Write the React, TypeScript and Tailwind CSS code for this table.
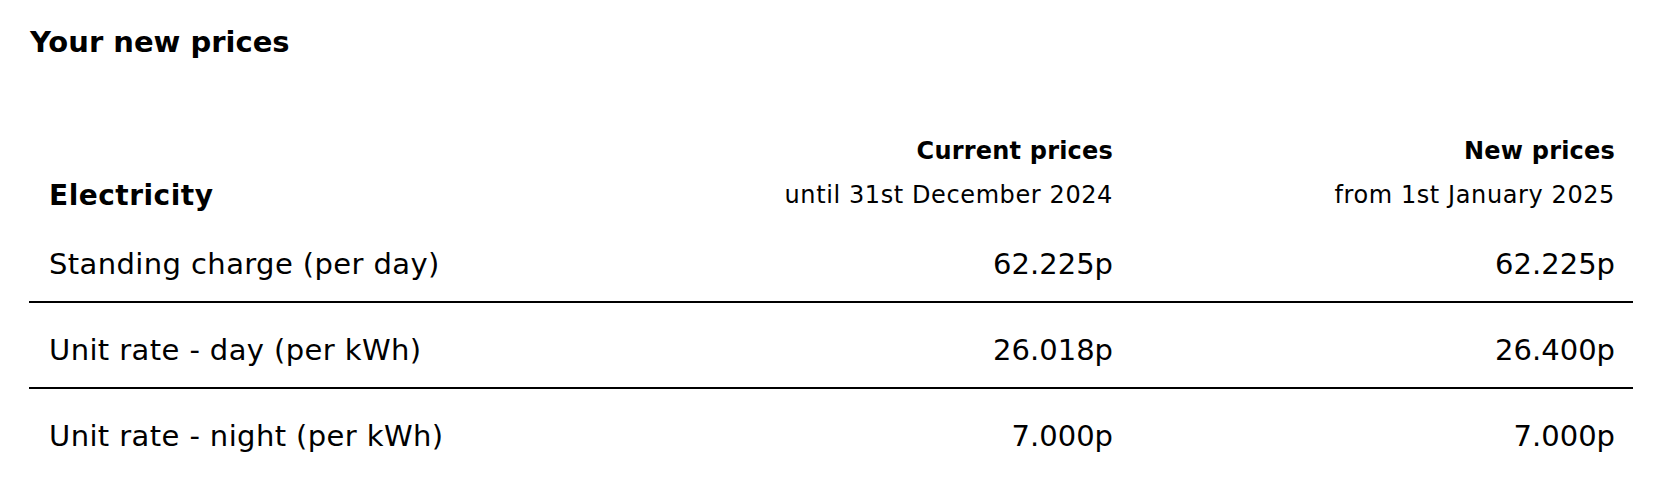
const rows = [
  { label: 'Standing charge (per day)', current: '62.225p', next: '62.225p' },
  { label: 'Unit rate - day (per kWh)', current: '26.018p', next: '26.400p' },
  { label: 'Unit rate - night (per kWh)', current: '7.000p', next: '7.000p' },
];

export default function App() {
  return (
    <div className="min-h-[484px] w-[1667px] bg-white pt-6 pl-[30px] text-black font-['DejaVu_Sans',sans-serif]">
      <h2 className="text-[29px] font-bold leading-[36px]">Your new prices</h2>

      <div className="mt-[76px] -ml-px w-[1604px]">
        <div className="grid grid-cols-[1fr_502px_502px] items-end">
          <div className="pl-5 text-[28px] font-bold leading-[28px] tracking-[0.5px]">Electricity</div>
          <PriceHead title="Current prices" note="until 31st December 2024" />
          <PriceHead title="New prices" note="from 1st January 2025" />
        </div>

        {rows.map((row, i) => (
          <div
            key={row.label}
            className={`grid grid-cols-[1fr_502px_502px] text-[29px] leading-[36px] ${
              i === 0 ? 'pt-[36px]' : 'pt-[29px]'
            } ${i < rows.length - 1 ? 'border-b-2 border-black pb-[19px]' : 'pb-[19px]'}`}
          >
            <div className="pl-5 tracking-[0.4px]">{row.label}</div>
            <div className="pr-[18px] text-right">{row.current}</div>
            <div className="pr-[18px] text-right">{row.next}</div>
          </div>
        ))}
      </div>
    </div>
  );
}

function PriceHead({ title, note }: { title: string; note: string }) {
  return (
    <div className="flex flex-col items-end pr-[18px]">
      <span className="text-[24px] font-bold leading-[30px] tracking-[0.2px]">{title}</span>
      <span className="mt-[14px] text-[24px] leading-[30px] tracking-[0.6px]">{note}</span>
    </div>
  );
}
